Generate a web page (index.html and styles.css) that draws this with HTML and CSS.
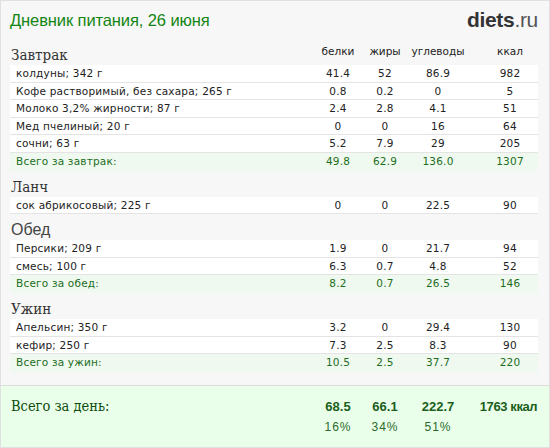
FILE: index.html
```html
<!DOCTYPE html>
<html>
<head>
<meta charset="utf-8">
<link rel="stylesheet" href="styles.css">
</head>
<body>
<div class="page">
  <div class="top">
    <div class="title">Дневник питания, 26 июня</div>
    <div class="logo"><b>diets</b>.ru</div>
  </div>

  <div class="table">
    <div class="head">
      <div class="meal">Завтрак</div>
      <div class="c">белки</div><div class="c">жиры</div><div class="c">углеводы</div><div class="c k">ккал</div>
    </div>
    <div class="row"><div class="n">колдуны; 342 г</div><div class="c">41.4</div><div class="c">52</div><div class="c">86.9</div><div class="c k">982</div></div>
    <div class="row"><div class="n">Кофе растворимый, без сахара; 265 г</div><div class="c">0.8</div><div class="c">0.2</div><div class="c">0</div><div class="c k">5</div></div>
    <div class="row"><div class="n">Молоко 3,2% жирности; 87 г</div><div class="c">2.4</div><div class="c">2.8</div><div class="c">4.1</div><div class="c k">51</div></div>
    <div class="row"><div class="n">Мед пчелиный; 20 г</div><div class="c">0</div><div class="c">0</div><div class="c">16</div><div class="c k">64</div></div>
    <div class="row"><div class="n">сочни; 63 г</div><div class="c">5.2</div><div class="c">7.9</div><div class="c">29</div><div class="c k">205</div></div>
    <div class="row total"><div class="n">Всего за завтрак:</div><div class="c">49.8</div><div class="c">62.9</div><div class="c">136.0</div><div class="c k">1307</div></div>

    <div class="head"><div class="meal">Ланч</div></div>
    <div class="row"><div class="n">сок абрикосовый; 225 г</div><div class="c">0</div><div class="c">0</div><div class="c">22.5</div><div class="c k">90</div></div>

    <div class="head"><div class="meal sans">Обед</div></div>
    <div class="row"><div class="n">Персики; 209 г</div><div class="c">1.9</div><div class="c">0</div><div class="c">21.7</div><div class="c k">94</div></div>
    <div class="row"><div class="n">смесь; 100 г</div><div class="c">6.3</div><div class="c">0.7</div><div class="c">4.8</div><div class="c k">52</div></div>
    <div class="row total"><div class="n">Всего за обед:</div><div class="c">8.2</div><div class="c">0.7</div><div class="c">26.5</div><div class="c k">146</div></div>

    <div class="head"><div class="meal">Ужин</div></div>
    <div class="row"><div class="n">Апельсин; 350 г</div><div class="c">3.2</div><div class="c">0</div><div class="c">29.4</div><div class="c k">130</div></div>
    <div class="row"><div class="n">кефир; 250 г</div><div class="c">7.3</div><div class="c">2.5</div><div class="c">8.3</div><div class="c k">90</div></div>
    <div class="row total"><div class="n">Всего за ужин:</div><div class="c">10.5</div><div class="c">2.5</div><div class="c">37.7</div><div class="c k">220</div></div>
  </div>

  <div class="day">
    <div class="dayrow">
      <div class="daylabel">Всего за день:</div>
      <div class="c b">68.5</div><div class="c b">66.1</div><div class="c b">222.7</div><div class="c k b kcal">1763 ккал</div>
    </div>
    <div class="dayrow pct">
      <div></div>
      <div class="c">16%</div><div class="c">34%</div><div class="c">51%</div><div class="c k"></div>
    </div>
  </div>
</div>
</body>
</html>
```

FILE: styles.css
```css
* { box-sizing: border-box; }
html, body { margin: 0; padding: 0; }
body { width: 550px; height: 448px; overflow: hidden; background: #fff; }

.page {
  width: 550px;
  height: 448px;
  background: #f7f7f7;
  border: 1px solid #e0e0e0;
  display: flex;
  flex-direction: column;
}

.top {
  height: 38px;
  padding: 0 11px 0 9px;
  display: flex;
  justify-content: space-between;
  align-items: center;
}
.title {
  font-family: "Liberation Sans", Arial, sans-serif;
  font-size: 16.5px;
  color: #138513;
  letter-spacing: -0.1px;
}
.logo {
  font-family: "Liberation Sans", Arial, sans-serif;
  font-size: 21px;
  color: #555;
  letter-spacing: -0.3px;
}
.logo b { color: #333; }

.table {
  padding: 0 11px 0 9px;
  font-family: "DejaVu Sans", Verdana, sans-serif;
  font-size: 10.5px;
  color: #222;
}

.head, .row, .dayrow {
  display: grid;
  grid-template-columns: 1fr 46px 48px 58px 71px;
}

.head {
  height: 26px;
  align-items: end;
}
.head .c {
  line-height: 20px;
  padding-bottom: 4px;
}
.meal {
  font-family: "DejaVu Serif Condensed", "DejaVu Serif", Georgia, serif;
  font-size: 15px;
  color: #333;
  line-height: 20px;
  padding-left: 1px;
}
.meal.sans {
  font-family: "Liberation Sans", Arial, sans-serif;
  font-size: 16px;
  color: #444;
}

.row {
  background: #fff;
  height: 17.6px;
  line-height: 16.6px;
  border-bottom: 1px solid #e4e4e4;
  letter-spacing: 0.2px;
}
.row .n { padding-left: 6px; white-space: nowrap; }
.c { text-align: center; white-space: nowrap; }
.k { padding-left: 15px; }

.row.total {
  background: #eff9ef;
  color: #1d6e1d;
  border-bottom: none;
}

.day {
  margin-top: auto;
  height: 62px;
  background: #eaffea;
  border-top: 1px solid #dcdcdc;
  padding: 10px 11px 0 9px;
}
.dayrow { line-height: 21px; }
.daylabel {
  font-family: "DejaVu Serif Condensed", "DejaVu Serif", Georgia, serif;
  font-size: 14.5px;
  color: #0d4d0d;
  padding-left: 1px;
}
.dayrow .b {
  font-family: "Liberation Sans", Arial, sans-serif;
  font-weight: bold;
  font-size: 13px;
  color: #1b5e1b;
}
.dayrow .kcal {
  letter-spacing: -0.4px;
  padding-left: 12px;
}
.pct .c {
  font-family: "Liberation Sans", Arial, sans-serif;
  font-size: 12px;
  color: #2a6a2a;
  letter-spacing: 1px;
}
```
